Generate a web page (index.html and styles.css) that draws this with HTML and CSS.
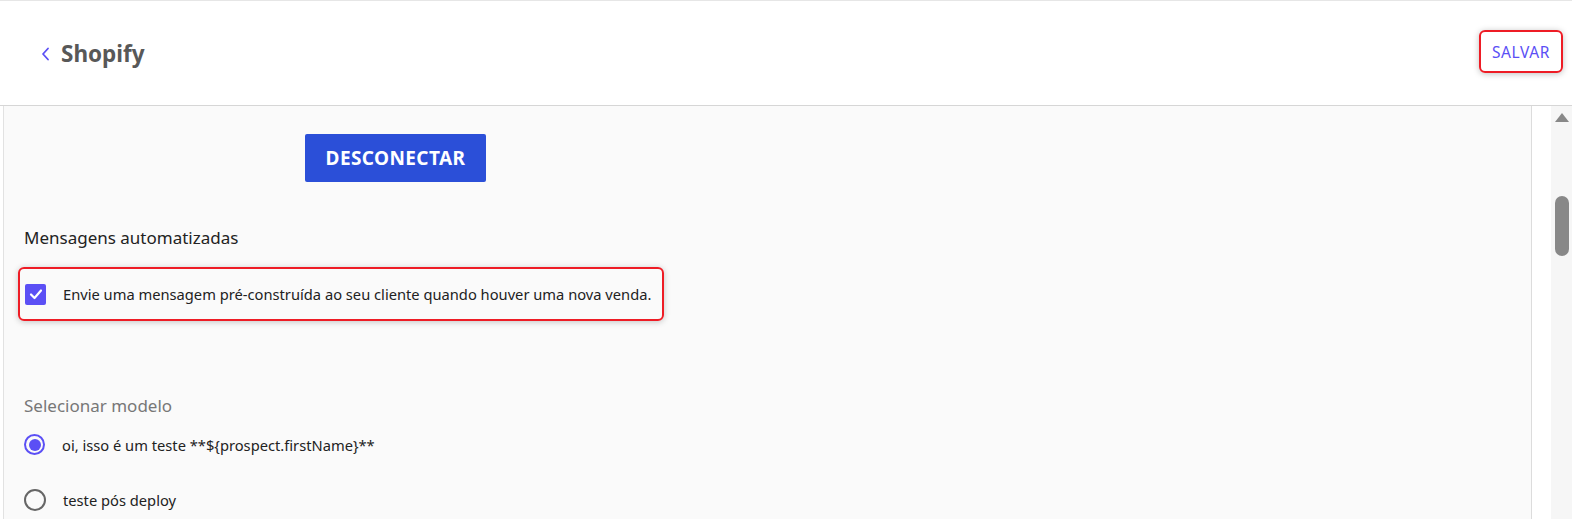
FILE: index.html
```html
<!DOCTYPE html>
<html lang="pt-BR">
<head>
    <meta charset="UTF-8">
    <meta name="viewport" content="width=device-width, initial-scale=1.0">
    <title>Shopify - Integração</title>
    <link rel="stylesheet" href="styles.css">
</head>
<body>
    <!-- Cabeçalho -->
    <header class="topbar">
        <a class="back" href="#">
            <svg class="back-icon" width="12" height="14" viewBox="0 0 12 14">
                <path d="M8 1.5 L3 7 L8 12.5" fill="none" stroke="#5b4ff5" stroke-width="1.8" stroke-linecap="round" stroke-linejoin="round"/>
            </svg>
            <span class="title">Shopify</span>
        </a>
        <div class="save-wrap">
            <button class="save-btn">SALVAR</button>
        </div>
    </header>

    <div class="main">
        <div class="content">
            <div class="connect-row">
                <button class="disconnect-btn">DESCONECTAR</button>
            </div>

            <h3 class="section-title">Mensagens automatizadas</h3>

            <div class="highlight">
                <label class="check-row">
                    <span class="checkbox">
                        <svg width="16" height="16" viewBox="0 0 16 16">
                            <path d="M3 8.5 L6.5 12 L13 4.5" fill="none" stroke="#fff" stroke-width="2.2" stroke-linecap="round" stroke-linejoin="round"/>
                        </svg>
                    </span>
                    <span>Envie uma mensagem pré-construída ao seu cliente quando houver uma nova venda.</span>
                </label>
            </div>

            <h3 class="section-title muted">Selecionar modelo</h3>

            <label class="radio-row">
                <span class="radio checked"></span>
                <span>oi, isso é um teste **${prospect.firstName}**</span>
            </label>
            <label class="radio-row">
                <span class="radio"></span>
                <span>teste pós deploy</span>
            </label>
        </div>

        <div class="gutter"></div>

        <!-- barra de rolagem -->
        <div class="scrollbar">
            <div class="scroll-arrow"></div>
            <div class="scroll-thumb"></div>
        </div>
    </div>
</body>
</html>
```

FILE: styles.css
```css
body {
    margin: 0;
    font-family: "Noto Sans", "Open Sans", sans-serif;
    color: #222;
    background: #fff;
    height: 519px;
    overflow: hidden;
}
.topbar {
    height: 104px;
    border-top: 1px solid #e6e6e6;
    border-bottom: 1px solid #d6d6d6;
    display: flex;
    align-items: center;
    justify-content: space-between;
    padding: 0 14px 0 40px;
    background: #fff;
}
.back {
    display: flex;
    align-items: center;
    gap: 9px;
    text-decoration: none;
}
.back-icon {
    margin-top: 2px;
}
.title {
    font-size: 22.5px;
    font-weight: 700;
    color: #585858;
}
.save-wrap {
    box-sizing: border-box;
    width: 84px;
    height: 43px;
    margin-top: -3px;
    margin-right: -5px;
    border: 2px solid #ee1c25;
    border-radius: 6px;
    box-shadow: 0 1px 6px rgba(0,0,0,0.25);
    display: flex;
    align-items: center;
    justify-content: center;
}
.save-btn {
    background: none;
    border: none;
    font-family: inherit;
    font-size: 15.5px;
    color: #5b4ff5;
    padding: 0;
    letter-spacing: 0.6px;
}
.main {
    display: flex;
    height: 413px;
}
.content {
    width: 1507px;
    margin-left: 3px;
    border-left: 1px solid #e2e2e2;
    border-right: 1px solid #dcdcdc;
    background: #fafafa;
    padding: 0 0 0 20px;
}
.connect-row {
    padding: 28px 0 0 281px;
}
.disconnect-btn {
    width: 181px;
    height: 48px;
    background: #2b4fd8;
    color: #fff;
    border: none;
    border-radius: 2px;
    font-family: inherit;
    font-size: 19px;
    font-weight: 700;
    letter-spacing: 0.4px;
}
.section-title {
    margin: 45px 0 0 0;
    font-size: 17px;
    font-weight: 400;
    line-height: 22px;
}
.muted {
    margin-top: 74px;
    color: #777;
}
.highlight {
    margin: 18px 0 0 -6px;
    width: 642px;
    height: 50px;
    border: 2px solid #ee1c25;
    border-radius: 6px;
    box-shadow: 0 1px 6px rgba(0,0,0,0.22);
    display: flex;
    align-items: center;
}
.check-row {
    display: flex;
    align-items: center;
    gap: 17px;
    padding-left: 5px;
    font-size: 14.7px;
}
.checkbox {
    width: 21px;
    height: 21px;
    background: #5b4ff5;
    border-radius: 2px;
    display: flex;
    align-items: center;
    justify-content: center;
}
.radio-row {
    display: flex;
    align-items: center;
    gap: 17px;
    font-size: 14.7px;
    height: 55px;
}
.radio {
    width: 18px;
    height: 18px;
    border: 2px solid #666;
    border-radius: 50%;
    display: flex;
    align-items: center;
    justify-content: center;
}
.radio.checked {
    border: 2.5px solid #5b4ff5;
    width: 17px;
    height: 17px;
}
.radio.checked::after {
    content: "";
    width: 12px;
    height: 12px;
    border-radius: 50%;
    background: #5b4ff5;
}
.gutter {
    width: 19px;
}
.scrollbar {
    width: 21px;
    background: #f6f6f6;
    display: flex;
    flex-direction: column;
    align-items: center;
}
.scroll-arrow {
    margin-top: 7px;
    width: 0;
    height: 0;
    border-left: 7px solid transparent;
    border-right: 7px solid transparent;
    border-bottom: 9px solid #888;
}
.scroll-thumb {
    margin-top: 74px;
    width: 14px;
    height: 60px;
    border-radius: 7px;
    background: #888;
}
```
